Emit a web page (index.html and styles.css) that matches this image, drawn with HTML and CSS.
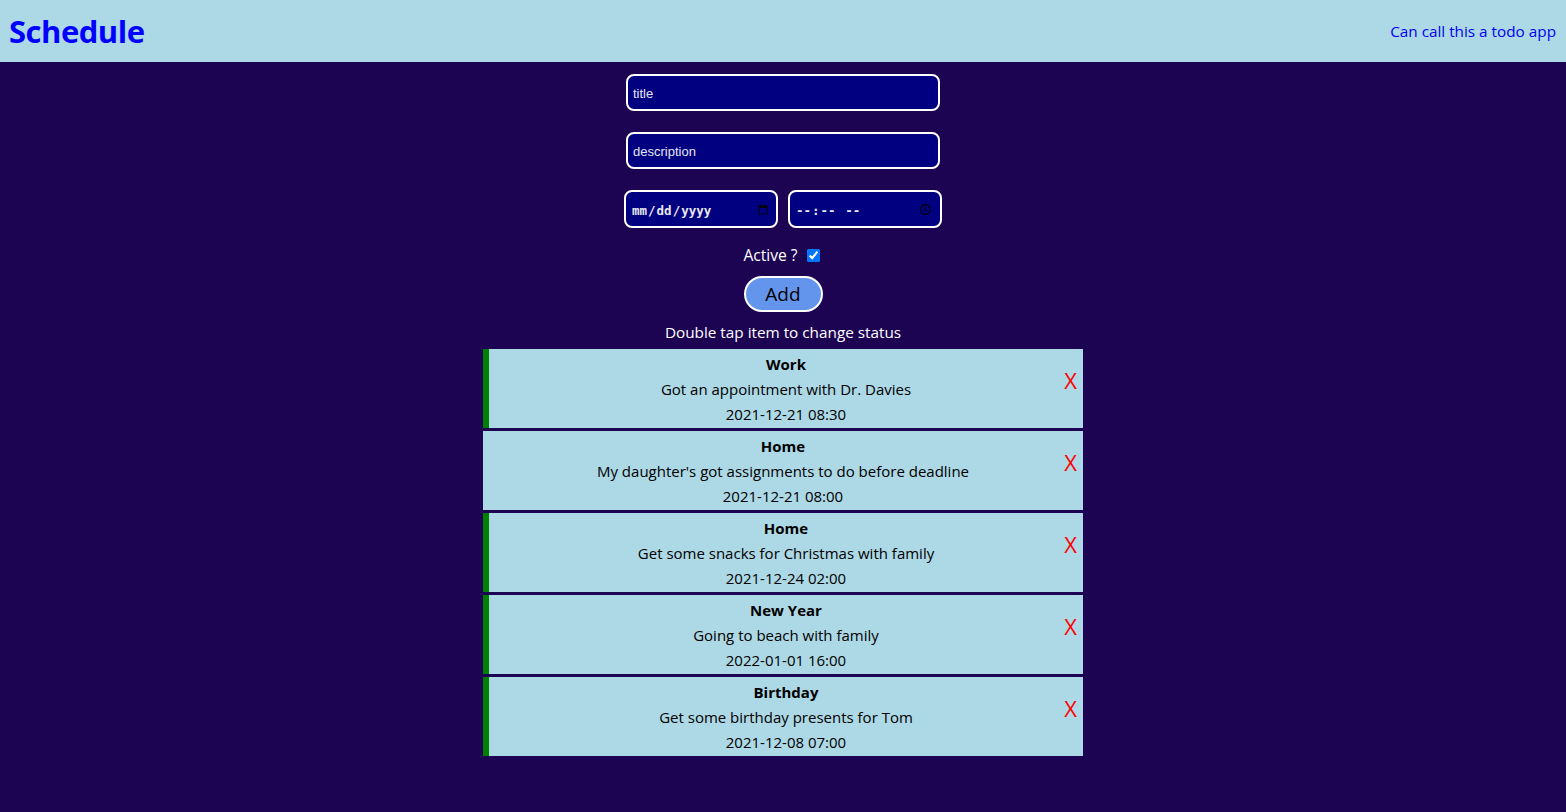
FILE: index.html
```html
<!DOCTYPE html>
<html>
<head>
<meta charset="utf-8">
<link rel="stylesheet" href="styles.css">
</head>
<body>
<header class="topbar">
  <h1 class="brand">Schedule</h1>
  <a class="tagline" href="#">Can call this a todo app</a>
</header>
<main class="page">
  <form class="form">
    <input class="field" type="text" placeholder="title">
    <input class="field" type="text" placeholder="description">
    <div class="when">
      <input class="field small mono" type="date">
      <input class="field small mono" type="time">
    </div>
    <label class="active">Active ? <input type="checkbox" checked></label>
    <button class="add" type="button">Add</button>
  </form>
  <p class="hint">Double tap item to change status</p>
  <ul class="list">
    <li class="item on"><div class="body"><b>Work</b><span>Got an appointment with Dr. Davies</span><span>2021-12-21 08:30</span></div><span class="del">X</span></li>
    <li class="item"><div class="body"><b>Home</b><span>My daughter's got assignments to do before deadline</span><span>2021-12-21 08:00</span></div><span class="del">X</span></li>
    <li class="item on"><div class="body"><b>Home</b><span>Get some snacks for Christmas with family</span><span>2021-12-24 02:00</span></div><span class="del">X</span></li>
    <li class="item on"><div class="body"><b>New Year</b><span>Going to beach with family</span><span>2022-01-01 16:00</span></div><span class="del">X</span></li>
    <li class="item on"><div class="body"><b>Birthday</b><span>Get some birthday presents for Tom</span><span>2021-12-08 07:00</span></div><span class="del">X</span></li>
  </ul>
</main>
</body>
</html>
```
FILE: styles.css
```css
html, body {
  margin: 0;
  padding: 0;
}
body {
  background: #1d0452;
  font-family: "Open Sans", "Noto Sans", sans-serif;
  color: #fff;
  min-height: 812px;
}
.topbar {
  height: 62px;
  background: #add8e6;
  display: flex;
  align-items: center;
  justify-content: space-between;
  padding: 0 10px 0 9px;
  box-sizing: border-box;
}
.brand {
  margin: 0;
  font-size: 31px;
  font-weight: 700;
  color: #0000ff;
  letter-spacing: -0.5px;
}
.tagline {
  color: #0000ee;
  text-decoration: none;
  font-size: 15.3px;
  margin-top: -1px;
}
.page {
  display: flex;
  flex-direction: column;
  align-items: center;
}
.form {
  display: flex;
  flex-direction: column;
  align-items: center;
  margin-top: 12px;
}
.field {
  width: 314px;
  height: 37px;
  box-sizing: border-box;
  background: #000080;
  border: 2px solid #fff;
  border-radius: 8px;
  color: #fff;
  font-family: "Liberation Sans", Arial, sans-serif;
  font-size: 13px;
  padding: 2px 5px 0;
  margin-bottom: 21px;
  outline: none;
}
.field::placeholder {
  color: #e6e6f0;
}
.when {
  display: flex;
  gap: 10px;
}
.field.small {
  width: 154px;
  height: 38px;
  margin-bottom: 0;
}
.mono {
  font-family: "DejaVu Sans Mono", "Liberation Mono", monospace;
  font-size: 12.5px;
  font-weight: 600;
  color: #e8e8f0;
}
.active {
  margin-top: 16px;
  font-size: 15.6px;
  line-height: 22px;
  display: flex;
  align-items: center;
  gap: 4px;
  margin-left: -3px;
}
.active input {
  margin: 0 0 0 5px;
  width: 13px;
  height: 13px;
}
.add {
  margin-top: 10px;
  width: 79px;
  height: 36px;
  background: #6495ed;
  border: 2px solid #fff;
  border-radius: 18px;
  font-family: "Open Sans", "Noto Sans", sans-serif;
  font-size: 19px;
  color: #000;
  padding: 0;
}
.hint {
  margin: 10px 0 7px;
  font-size: 15.3px;
  line-height: 20px;
}
.list {
  list-style: none;
  margin: 0;
  padding: 0;
  width: 600px;
  display: flex;
  flex-direction: column;
  gap: 3px;
}
.item {
  background: #add8e6;
  color: #000;
  height: 79px;
  box-sizing: border-box;
  display: flex;
  align-items: center;
  position: relative;
  padding-top: 2px;
}
.item.on {
  border-left: 6px solid #008000;
}
.body {
  flex: 1;
  display: flex;
  flex-direction: column;
  align-items: center;
  font-size: 15px;
  line-height: 25px;
}
.del {
  position: absolute;
  right: 6px;
  top: 18px;
  line-height: 26px;
  color: #ff0000;
  font-size: 22px;
}
```
